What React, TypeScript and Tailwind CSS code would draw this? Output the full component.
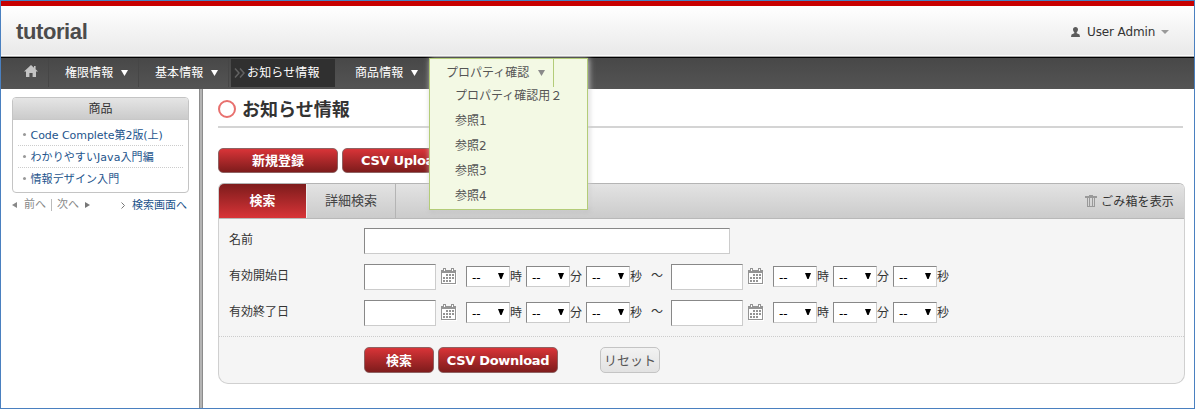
import React from "react";

const books = [
  { title: "Code Complete第2版(上)", tracking: "tracking-[-0.05px]" },
  { title: "わかりやすいJava入門編", tracking: "tracking-[0.08px]" },
  { title: "情報デザイン入門", tracking: "tracking-[0.1px]" },
];

const references = ["プロパティ確認用２", "参照1", "参照2", "参照3", "参照4"];

function Caret({ className }: { className: string }) {
  return (
    <svg className={`shrink-0 ${className}`} width="7" height="6" viewBox="0 0 7 6">
      <path d="M0 0h7L3.500 6z" fill="currentColor" />
    </svg>
  );
}

function HomeIcon() {
  return (
    <svg className="shrink-0" width="14" height="12" viewBox="0 0 14 12" fill="#c4c4c4">
      <path d="M7 0 0 6.400h2V12h3.400V8h3.200v4H12V6.400h2L11.600 4.200V1H10v1.700z" />
    </svg>
  );
}

function UserIcon() {
  return (
    <svg className="shrink-0" width="9" height="10" viewBox="0 0 9 10" fill="#5c5c5c">
      <path d="M4.500 0C6 0 7 1 7 2.600c0 1.200-.6 2-1.300 2.700v1L8.500 7.500 9 10H0l.5-2.500 2.800-1.200v-1C2.600 4.600 2 3.800 2 2.600 2 1 3 0 4.500 0z" />
    </svg>
  );
}

function TrashIcon() {
  return (
    <svg className="shrink-0" width="12" height="12" viewBox="0 0 12 12" shapeRendering="crispEdges" fill="#999">
      <path d="M4 0h4v1H4zM0 1h12v2H0zM2 3h1v8H2zM9 3h1v8H9zM4 3h1v8H4zM7 3h1v8H7zM2 11h8v1H2z" />
    </svg>
  );
}

function CalendarIcon() {
  return (
    <svg className="shrink-0" width="16" height="17" viewBox="0 0 16 17" shapeRendering="crispEdges">
      <path d="M1 4h15v13H1z" fill="#fff" />
      <path d="M0 2h15v14H0z" fill="#949494" />
      <path d="M1 5h13v10H1z" fill="#fff" />
      <path d="M2 0h3v4H2zM10 0h3v4h-3z" fill="#949494" />
      <path d="M3 1h1v2H3zM11 1h1v2h-1z" fill="#fff" />
      <path
        d="M5 6h2v2H5zM8 6h2v2H8zM11 6h2v2h-2zM2 9h2v2H2zM5 9h2v2H5zM8 9h2v2H8zM11 9h2v2h-2zM2 12h2v2H2zM5 12h2v2H5zM8 12h2v2H8z"
        fill="#949494"
      />
    </svg>
  );
}

function NumberSelect({ unit }: { unit: string }) {
  return (
    <div className="flex w-[60px] items-center">
      <div className="flex h-[21px] w-[44px] shrink-0 items-center justify-between border border-[#ccc] border-t-[#888] border-l-[#888] bg-white pr-[5px] pl-[5px] text-black">
        <span className="pt-[2px] text-[12px] leading-[16px]">--</span>
        <svg className="-mt-[2px]" width="6" height="6" viewBox="0 0 6 6">
          <path d="M0 0h6L3.600 6H2.400z" fill="#000" />
        </svg>
      </div>
      <span className="w-4 leading-[18px]">{unit}</span>
    </div>
  );
}

function DateTime() {
  return (
    <div className="flex items-center">
      <div className="h-[26px] w-[72px] border border-[#ccc] border-t-[#888] border-l-[#888] bg-white" />
      <div className="-mt-px flex w-[30px] pl-[5px]">
        <CalendarIcon />
      </div>
      <div className="-mt-px flex">
        <NumberSelect unit="時" />
        <NumberSelect unit="分" />
        <NumberSelect unit="秒" />
      </div>
    </div>
  );
}

function DateRow({ label }: { label: string }) {
  return (
    <div className="flex h-9 items-start">
      <span className="w-[135px] pt-[3px] leading-[18px]">{label}</span>
      <DateTime />
      <span className="w-[25px] pt-[3px] pl-[5px] leading-[18px]">～</span>
      <DateTime />
    </div>
  );
}

function RedButton({ children, className }: { children: React.ReactNode; className: string }) {
  return (
    <button
      className={`shrink-0 rounded-[5px] border border-[#8f6262] bg-linear-to-b from-[#d93438] to-[#7e1c1c] text-[13px] leading-[23px] font-bold whitespace-nowrap text-white ${className}`}
    >
      {children}
    </button>
  );
}

function Header() {
  return (
    <header className="flex h-[57px] shrink-0 items-center justify-between border-t-[5px] border-b border-t-[#c80000] border-b-black bg-linear-to-b from-white to-[#e8e8e8] shadow-[inset_0_-1px_0_#a5a5a5,inset_0_-2px_0_#fafafa]">
      <h1 className="pl-[15px] font-['Liberation_Sans'] text-[22px] leading-[26px] font-bold tracking-[-0.4px] text-[#4c4c4c]">
        tutorial
      </h1>
      <div className="flex items-center pr-[25px] text-[#333]">
        <UserIcon />
        <span className="w-[81px] pl-[7px] text-[12px] leading-[18px] tracking-[-0.12px] whitespace-nowrap">User Admin</span>
        <svg width="8" height="4" viewBox="0 0 8 4">
          <path d="M0 0h8L4 4z" fill="#999" />
        </svg>
      </div>
    </header>
  );
}

function NavItem({ label, className }: { label: string; className: string }) {
  return (
    <div className={`flex h-[29px] shrink-0 items-center border-r border-[#464646] ${className}`}>
      <span className="w-[56px] tracking-[0.1px] whitespace-nowrap">{label}</span>
      <Caret className="text-white" />
    </div>
  );
}

function Nav() {
  return (
    <nav className="flex h-[31px] shrink-0 bg-linear-to-b from-[#484848] to-[#545454] text-[12px] leading-[18px] text-white">
      <div className="flex h-[29px] w-[48px] items-center border-r border-[#464646] pb-[3px] pl-[23px]">
        <HomeIcon />
      </div>
      <NavItem label="権限情報" className="w-[90px] pl-[16px]" />
      <NavItem label="基本情報" className="w-[90px] pl-[16px]" />
      <div className="mt-px ml-[2px] flex h-7 w-[104px] items-center bg-[#303030] pl-[3px]">
        <svg width="11" height="10" viewBox="0 0 11 10" fill="none" stroke="#626262" strokeWidth="1.500">
          <path d="m1 .5 4 4.500-4 4.500M6 .5l4 4.500-4 4.500" />
        </svg>
        <span className="pl-[2px] tracking-[0.15px] whitespace-nowrap">お知らせ情報</span>
      </div>
      <NavItem label="商品情報" className="w-[94px] border-none pl-[20px]" />
      <div className="relative">
        <div className="absolute top-0 left-0 z-10 h-[152px] w-[159px] border border-[#b3cc78] bg-[#f3f9e4] text-[#555] shadow-[1px_0_6px_rgba(255,255,255,0.75),1px_1px_5px_rgba(0,0,0,0.25)]">
          <div className="flex h-[28px] w-[124px] items-center border-r border-[#b3cc78] pl-[16px]">
            <span className="w-[92px] whitespace-nowrap">プロパティ確認</span>
            <Caret className="text-[#8a8a8a]" />
          </div>
          <ul className="-mt-[3px] pl-[25px]">
            {references.map((name) => (
              <li key={name} className="h-[25px] leading-[25px] whitespace-nowrap">
                {name}
              </li>
            ))}
          </ul>
        </div>
      </div>
    </nav>
  );
}

function Sidebar() {
  return (
    <aside className="w-[198px] shrink-0 pt-2 pl-[11px]">
      <section className="h-[96px] w-[177px] overflow-hidden rounded-[4px] border border-[#c4c4c4]">
        <h2 className="h-[22px] border-b border-[#c8c8c8] bg-linear-to-b from-[#e5e5e5] to-[#cbcbcb] text-center text-[12px] leading-[22px] font-normal">
          商品
        </h2>
        <ul className="px-[5px] pt-[4px] text-[11px] leading-[21px] text-[#1d548c]">
          {books.map((book) => (
            <li
              key={book.title}
              className="flex h-[22px] items-center border-b border-dotted border-[#ccc] whitespace-nowrap last:border-transparent"
            >
              <span className="mr-[4.500px] ml-[5px] size-[3px] rounded-full bg-[#999]" />
              <span className={`pt-px ${book.tracking}`}>{book.title}</span>
            </li>
          ))}
        </ul>
      </section>
      <div className="flex h-[24px] items-center text-[11px] leading-[18px] whitespace-nowrap text-[#888]">
        <svg width="5" height="6" viewBox="0 0 5 6">
          <path d="M5 0v6L0 3z" fill="#888" />
        </svg>
        <span className="w-[34px] pl-[7px]">前へ</span>
        <span className="h-3 w-px bg-[#bbb]" />
        <span className="w-[33px] pl-[5px]">次へ</span>
        <svg width="5" height="6" viewBox="0 0 5 6">
          <path d="M0 0v6l5-3z" fill="#777" />
        </svg>
        <svg className="mt-px ml-[31px]" width="4" height="7" viewBox="0 0 4 7" fill="none" stroke="#777">
          <path d="m.5.5 3 3-3 3" />
        </svg>
        <a className="pt-px pl-[7px] text-[#1d548c]">検索画面へ</a>
      </div>
    </aside>
  );
}

function SearchPanel() {
  return (
    <section className="mt-[10px] h-[201px] w-[967px] overflow-hidden rounded-t-[6px] rounded-b-[10px] border border-[#d0d0d0] border-t-[#b4b4b4] bg-[#f5f5f5]">
      <div className="flex h-[35px] border-b border-[#b8b8b8] bg-linear-to-b from-[#e3e3e3] to-[#cbcbcb] text-[13px] leading-[34px]">
        <div className="w-[87px] bg-linear-to-b from-[#7e1c1c] to-[#d93438] text-center font-bold text-white">検索</div>
        <div className="w-[90px] border-r border-l border-r-[#b4b4b4] border-l-[#eee] text-center text-[#444]">詳細検索</div>
        <div className="ml-auto flex items-center pr-[10px] text-[12px] text-[#333]">
          <TrashIcon />
          <span className="pt-px pl-[4px] tracking-[0.15px]">ごみ箱を表示</span>
        </div>
      </div>
      <div className="h-[118px] border-b border-dotted border-[#ccc] pt-[9px] pl-[10px] text-[12px]">
        <div className="flex h-9">
          <span className="w-[135px] pt-[3px] leading-[18px]">名前</span>
          <div className="h-[26px] w-[366px] border border-[#ccc] border-t-[#888] border-l-[#888] bg-white" />
        </div>
        <DateRow label="有効開始日" />
        <DateRow label="有効終了日" />
      </div>
      <div className="flex pt-[10px] pl-[145px]">
        <RedButton className="h-[26px] w-[70px]">検索</RedButton>
        <RedButton className="ml-1 h-[26px] w-[120px] tracking-[-0.3px]">CSV Download</RedButton>
        <button className="ml-[42px] h-[26px] w-[60px] rounded-[5px] border border-[#c4c4c4] bg-linear-to-b from-[#f2f2f2] to-[#e2e2e2] text-[13px] leading-[23px] whitespace-nowrap text-[#555]">
          リセット
        </button>
      </div>
    </section>
  );
}

export default function App() {
  return (
    <div className="flex h-[409px] w-[1195px] flex-col overflow-hidden border border-[#4a80c0] bg-white font-['DejaVu_Sans','Noto_Sans_CJK_JP',sans-serif] text-[#333]">
      <Header />
      <Nav />
      <div className="flex min-h-0 flex-1">
        <Sidebar />
        <div className="w-1 shrink-0 border-r border-l border-[#8c8c8c] bg-[#b4b4b4]" />
        <main className="pl-[15px]">
          <div className="flex h-[39px] w-[965px] items-center border-b-2 border-[#d4d4d4]">
            <span className="mt-[3px] size-[18px] rounded-full border-2 border-[#e8706e]" />
            <h2 className="mt-[4px] pl-[6px] text-[18px] leading-[26px] font-bold">お知らせ情報</h2>
          </div>
          <div className="mt-5 flex gap-1">
            <RedButton className="h-[25px] w-[120px]">新規登録</RedButton>
            <RedButton className="h-[25px] w-[120px] tracking-[-0.3px]">CSV Upload</RedButton>
          </div>
          <SearchPanel />
        </main>
      </div>
    </div>
  );
}
